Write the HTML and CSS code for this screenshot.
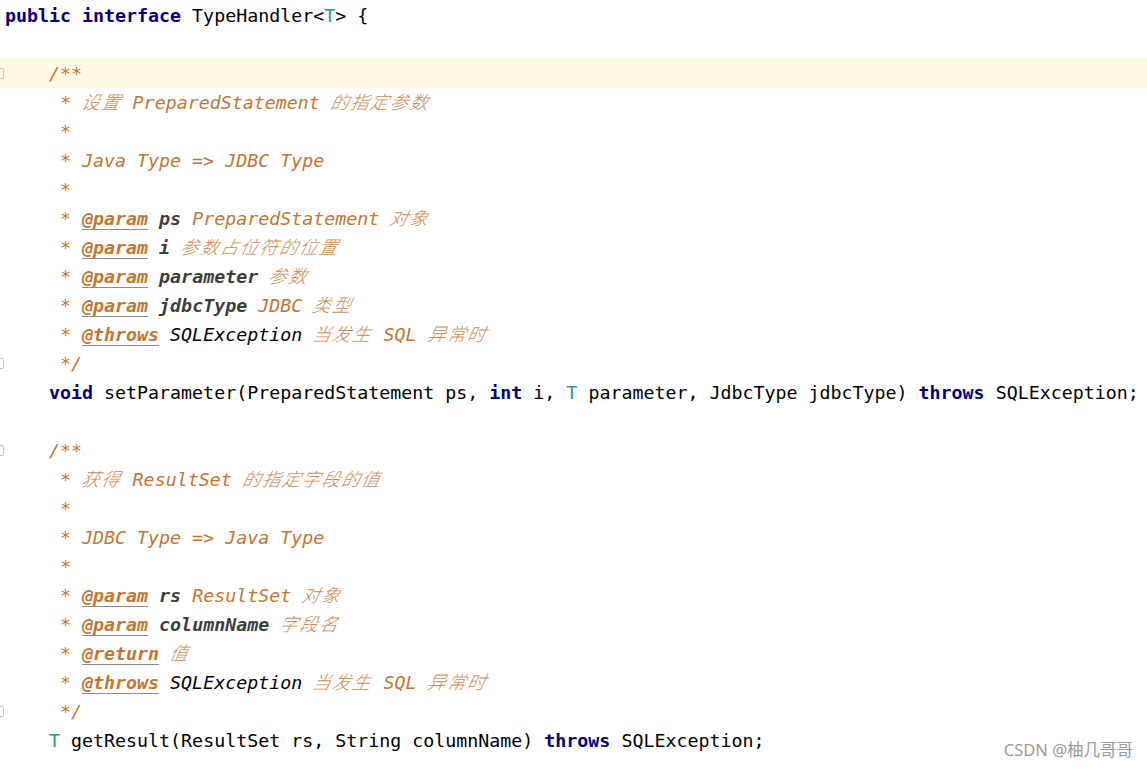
FILE: index.html
```html
<!DOCTYPE html>
<html lang="zh-CN">

<head>
  <title>TypeHandler.java</title>
  <meta charset="UTF-8">
  <meta name="viewport" content="width=device-width, initial-scale=1.0">
  <link rel="stylesheet" href="styles.css">
</head>

<body>
  <div class="editor">
    <div class="line"><span class="gutter"></span><span class="kw">public interface</span> TypeHandler&lt;<span class="tp">T</span>&gt; {</div>
    <div class="line"><span class="gutter"></span></div>
    <div class="line current"><span class="gutter"><span class="fold"></span></span>    <span class="doc">/**</span></div>
    <div class="line"><span class="gutter"></span><span class="doc">     * <span class="zh">设置</span> PreparedStatement <span class="zh">的指定参数</span></span></div>
    <div class="line"><span class="gutter"></span><span class="doc">     *</span></div>
    <div class="line"><span class="gutter"></span><span class="doc">     * Java Type =&gt; JDBC Type</span></div>
    <div class="line"><span class="gutter"></span><span class="doc">     *</span></div>
    <div class="line"><span class="gutter"></span><span class="doc">     * <span class="tag">@param</span> <span class="pname">ps</span> PreparedStatement <span class="zh">对象</span></span></div>
    <div class="line"><span class="gutter"></span><span class="doc">     * <span class="tag">@param</span> <span class="pname">i</span> <span class="zh">参数占位符的位置</span></span></div>
    <div class="line"><span class="gutter"></span><span class="doc">     * <span class="tag">@param</span> <span class="pname">parameter</span> <span class="zh">参数</span></span></div>
    <div class="line"><span class="gutter"></span><span class="doc">     * <span class="tag">@param</span> <span class="pname">jdbcType</span> JDBC <span class="zh">类型</span></span></div>
    <div class="line"><span class="gutter"></span><span class="doc">     * <span class="tag">@throws</span> <span class="ref">SQLException</span> <span class="zh">当发生</span> SQL <span class="zh">异常时</span></span></div>
    <div class="line"><span class="gutter"><span class="fold"></span></span><span class="doc">     */</span></div>
    <div class="line"><span class="gutter"></span>    <span class="kw">void</span> setParameter(PreparedStatement ps, <span class="kw">int</span> i, <span class="tp">T</span> parameter, JdbcType jdbcType) <span class="kw">throws</span> SQLException;</div>
    <div class="line"><span class="gutter"></span></div>
    <div class="line"><span class="gutter"><span class="fold"></span></span>    <span class="doc">/**</span></div>
    <div class="line"><span class="gutter"></span><span class="doc">     * <span class="zh">获得</span> ResultSet <span class="zh">的指定字段的值</span></span></div>
    <div class="line"><span class="gutter"></span><span class="doc">     *</span></div>
    <div class="line"><span class="gutter"></span><span class="doc">     * JDBC Type =&gt; Java Type</span></div>
    <div class="line"><span class="gutter"></span><span class="doc">     *</span></div>
    <div class="line"><span class="gutter"></span><span class="doc">     * <span class="tag">@param</span> <span class="pname">rs</span> ResultSet <span class="zh">对象</span></span></div>
    <div class="line"><span class="gutter"></span><span class="doc">     * <span class="tag">@param</span> <span class="pname">columnName</span> <span class="zh">字段名</span></span></div>
    <div class="line"><span class="gutter"></span><span class="doc">     * <span class="tag">@return</span> <span class="zh">值</span></span></div>
    <div class="line"><span class="gutter"></span><span class="doc">     * <span class="tag">@throws</span> <span class="ref">SQLException</span> <span class="zh">当发生</span> SQL <span class="zh">异常时</span></span></div>
    <div class="line"><span class="gutter"><span class="fold"></span></span><span class="doc">     */</span></div>
    <div class="line"><span class="gutter"></span>    <span class="tp">T</span> getResult(ResultSet rs, String columnName) <span class="kw">throws</span> SQLException;</div>
  </div>

  <div class="watermark">CSDN @柚几哥哥</div>
</body>

</html>
```

FILE: styles.css
```css
:root {
  --code-font: 'DejaVu Sans Mono', 'Noto Sans CJK SC', monospace;
  --keyword: #000080;
  --type-param: #20999d;
  --doc: #c47532;
  --line-height: 29px;
}

* {
  box-sizing: border-box;
  margin: 0;
  padding: 0;
}

body {
  background-color: #ffffff;
  color: #000000;
  width: 1147px;
  height: 769px;
  overflow: hidden;
  position: relative;
}

.editor {
  font-family: var(--code-font);
  font-size: 18.3px;
  padding-top: 1px;
}

.line {
  height: var(--line-height);
  line-height: var(--line-height);
  white-space: pre;
}

.line.current {
  background-color: #fef9e4;
}

.gutter {
  display: inline-flex;
  align-items: center;
  width: 5px;
  height: var(--line-height);
  vertical-align: top;
}

/* fold marker, mostly cut off at the left edge */
.fold {
  width: 4px;
  height: 11px;
  border: 1px solid #c4c4c4;
  border-left: none;
  border-radius: 0 2px 2px 0;
}

.kw {
  color: var(--keyword);
  font-weight: bold;
}

.tp {
  color: var(--type-param);
}

.doc {
  color: var(--doc);
  font-style: italic;
}

.tag {
  font-weight: bold;
  text-decoration: underline;
  text-decoration-color: #8a8a8a;
  text-underline-offset: 4px;
  text-decoration-thickness: 1px;
}

.pname {
  color: #3d3d3d;
  font-weight: bold;
}

.ref {
  color: #000000;
}

.zh {
  display: inline-block;
  letter-spacing: 1.5px;
  font-weight: 300;
  transform: skewX(-12deg);
  opacity: 0.85;
}

.watermark {
  position: absolute;
  right: 14px;
  bottom: 8px;
  font-family: 'Noto Sans', 'Noto Sans CJK SC', sans-serif;
  font-size: 16.5px;
  color: #9a9a9a;
}
```
